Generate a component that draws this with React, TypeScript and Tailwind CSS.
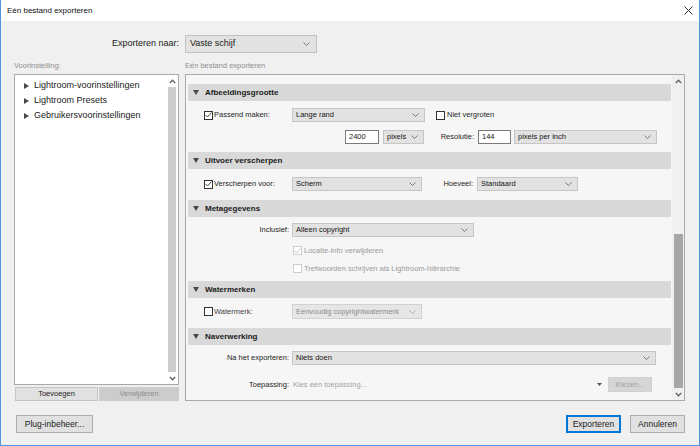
import React from "react";

const FONT = "font-['Liberation_Sans',Arial,sans-serif]";

function Chevron({ color = "#6b6b6b" }: { color?: string }) {
  return (
    <svg width="7" height="4" viewBox="0 0 7 4" className="shrink-0">
      <polyline points="0.5,0.5 3.5,3.5 6.5,0.5" fill="none" stroke={color} strokeWidth="0.9" />
    </svg>
  );
}

function ArrowUp() {
  return (
    <svg width="7" height="5" viewBox="0 0 7 5">
      <polyline points="0.8,4 3.5,1.2 6.2,4" fill="none" stroke="#606060" strokeWidth="1.3" />
    </svg>
  );
}

function ArrowDown() {
  return (
    <svg width="7" height="5" viewBox="0 0 7 5">
      <polyline points="0.8,1 3.5,3.8 6.2,1" fill="none" stroke="#606060" strokeWidth="1.3" />
    </svg>
  );
}

function Select({ text, className, disabled }: { text: string; className: string; disabled?: boolean }) {
  return (
    <div
      className={`flex items-center justify-between h-[14px] border pl-[3px] pr-[5px] text-[7.5px] ${
        disabled ? "border-[#d2d2d2] bg-[#e6e6e6] text-[#8c8c8c]" : "border-[#c6c6c6] bg-[#e2e2e2] text-[#141414]"
      } ${className}`}
    >
      <span>{text}</span>
      <Chevron color={disabled ? "#a5a5a5" : "#6b6b6b"} />
    </div>
  );
}

function Check({ checked, disabled }: { checked?: boolean; disabled?: boolean }) {
  return (
    <span
      className={`w-[9px] h-[9px] shrink-0 border flex items-center justify-center bg-white ${
        disabled ? "border-[#cfcfcf]" : "border-[#333333]"
      }`}
    >
      {checked && (
        <svg width="7" height="6" viewBox="0 0 7 6">
          <polyline
            points="0.6,3 2.6,5 6.4,0.6"
            fill="none"
            stroke={disabled ? "#bdbdbd" : "#333333"}
            strokeWidth="0.9"
          />
        </svg>
      )}
    </span>
  );
}

function Input({ value, className }: { value: string; className: string }) {
  return (
    <div className={`h-[14px] border border-[#7a7a7a] bg-white flex items-center px-[3px] text-[7.5px] text-[#141414] ${className}`}>
      {value}
    </div>
  );
}

function Header({ title }: { title: string }) {
  return (
    <div className="h-[17px] bg-[#d9d9d9] flex items-center pl-[5px] gap-[6px]">
      <svg width="6" height="5" viewBox="0 0 6 5">
        <polygon points="0,0 6,0 3,5" fill="#4a4a4a" />
      </svg>
      <span className="font-bold text-[8px] text-[#1a1a1a]">{title}</span>
    </div>
  );
}

function TreeItem({ label }: { label: string }) {
  return (
    <div className="h-[15px] flex items-center pl-[9px] gap-[5px]">
      <svg width="5" height="6" viewBox="0 0 5 6">
        <polygon points="0,0 5,3 0,6" fill="#4a4a4a" />
      </svg>
      <span className="text-[9px] text-[#1a1a1a]">{label}</span>
    </div>
  );
}

export default function App() {
  return (
    <div className={`${FONT} w-[700px] h-[446px] flex flex-col border-l border-r border-b border-[#4f94dc] bg-[#f0f0f0] text-[#1a1a1a]`}>
      {/* title bar */}
      <div className="h-[21px] bg-white flex items-center justify-between pl-[6px] pr-[6px] shrink-0">
        <span className="text-[8px] text-[#111]">Eén bestand exporteren</span>
        <svg width="9" height="9" viewBox="0 0 9 9">
          <path d="M0.5 0.5 L8.5 8.5 M8.5 0.5 L0.5 8.5" stroke="#333" strokeWidth="1" />
        </svg>
      </div>

      <div className="flex-1 flex flex-col pl-[13px] pr-[14px]">
        {/* export to */}
        <div className="mt-[14px] h-[18px] flex items-center gap-[6px]">
          <div className="w-[165px] text-right text-[9px] text-[#1a1a1a]">Exporteren naar:</div>
          <div className="w-[132px] h-[18px] flex items-center justify-between border border-[#c2c2c2] bg-[#e2e2e2] pl-[4px] pr-[6px] text-[9px]">
            <span>Vaste schijf</span>
            <Chevron />
          </div>
        </div>

        {/* labels */}
        <div className="h-[21px] pt-[4px] flex items-center gap-[6px] text-[7.5px] text-[#8f8f8f]">
          <div className="w-[165px]">Voorinstelling:</div>
          <div>Eén bestand exporteren</div>
        </div>

        {/* panels */}
        <div className="flex gap-[6px] h-[327px]">
          {/* left */}
          <div className="w-[165px] flex flex-col">
            <div className="h-[311px] border border-[#a9a9a9] bg-white flex">
              <div className="flex-1 pt-[3px]">
                <TreeItem label="Lightroom-voorinstellingen" />
                <TreeItem label="Lightroom Presets" />
                <TreeItem label="Gebruikersvoorinstellingen" />
              </div>
              <div className="w-[12px] flex flex-col items-center">
                <div className="h-[12px] flex items-center justify-center"><ArrowUp /></div>
                <div className="flex-1 w-[8px] bg-[#cdcdcd]" />
                <div className="h-[12px] flex items-center justify-center"><ArrowDown /></div>
              </div>
            </div>
            <div className="mt-[2px] flex h-[14px] text-[7.5px]">
              <div className="w-[83px] ml-[1px] border border-[#c4c4c4] bg-[#e1e1e1] flex items-center justify-center text-[#1a1a1a]">
                Toevoegen
              </div>
              <div className="w-[80px] ml-[1px] bg-[#cccccc] border border-[#cccccc] flex items-center justify-center text-[#8d8d8d]">
                Verwijderen
              </div>
            </div>
          </div>

          {/* right */}
          <div className="w-[500px] border border-[#a9a9a9] bg-[#f6f6f6] flex overflow-hidden">
            <div className="flex-1 pl-[2px] pr-[1px] pt-[9px] text-[7.5px] text-[#1e1e1e]">
              <Header title="Afbeeldingsgrootte" />
              <div className="h-[51px] pl-[16px] pt-[7px] flex flex-col gap-[8px]">
                <div className="flex items-center h-[14px]">
                  <div className="w-[88px] flex items-center gap-[1px]">
                    <Check checked />
                    <span>Passend maken:</span>
                  </div>
                  <Select text="Lange rand" className="w-[133px]" />
                  <div className="ml-[11px] flex items-center gap-[2px]">
                    <Check />
                    <span>Niet vergroten</span>
                  </div>
                </div>
                <div className="flex items-center h-[14px]">
                  <div className="w-[141px]" />
                  <Input value="2400" className="w-[34px]" />
                  <Select text="pixels" className="w-[41px] ml-[4px]" />
                  <div className="w-[50px] text-right">Resolutie:</div>
                  <Input value="144" className="w-[33px] ml-[4px]" />
                  <Select text="pixels per inch" className="w-[143px] ml-[3px]" />
                </div>
              </div>

              <Header title="Uitvoer verscherpen" />
              <div className="h-[31px] pl-[16px] pt-[8px]">
                <div className="flex items-center h-[14px]">
                  <div className="w-[88px] flex items-center gap-[1px]">
                    <Check checked />
                    <span>Verscherpen voor:</span>
                  </div>
                  <Select text="Scherm" className="w-[130px]" />
                  <div className="w-[51px] text-right">Hoeveel:</div>
                  <Select text="Standaard" className="w-[101px] ml-[4px]" />
                </div>
              </div>

              <Header title="Metagegevens" />
              <div className="h-[64px] pl-[16px] pt-[6px]">
                <div className="flex items-center h-[14px]">
                  <div className="w-[85px] mr-[3px] text-right">Inclusief:</div>
                  <Select text="Alleen copyright" className="w-[182px]" />
                </div>
                <div className="mt-[8px] h-[11px] flex items-center gap-[2px] pl-[89px] text-[#9a9a9a]">
                  <Check checked disabled />
                  <span>Locatie-info verwijderen</span>
                </div>
                <div className="mt-[7px] h-[11px] flex items-center gap-[2px] pl-[89px] text-[#9a9a9a]">
                  <Check disabled />
                  <span>Trefwoorden schrijven als Lightroom-hiërarchie</span>
                </div>
              </div>

              <Header title="Watermerken" />
              <div className="h-[30px] pl-[16px] pt-[6px]">
                <div className="flex items-center h-[15px]">
                  <div className="w-[88px] flex items-center gap-[1px] text-[#444]">
                    <Check />
                    <span>Watermerk:</span>
                  </div>
                  <Select text="Eenvoudig copyrightwatermerk" className="w-[130px] h-[15px]" disabled />
                </div>
              </div>

              <Header title="Naverwerking" />
              <div className="pl-[16px] pt-[6px]">
                <div className="flex items-center h-[14px]">
                  <div className="w-[85px] mr-[3px] text-right">Na het exporteren:</div>
                  <Select text="Niets doen" className="w-[364px]" />
                </div>
                <div className="mt-[12px] flex items-center h-[15px]">
                  <div className="w-[85px] mr-[3px] text-right">Toepassing:</div>
                  <div className="w-[312px] flex items-center justify-between pl-[1px] pr-[2px] text-[#a3a3a3]">
                    <span>Kies een toepassing...</span>
                    <svg width="5" height="3" viewBox="0 0 5 3">
                      <polygon points="0,0 5,0 2.5,3" fill="#555" />
                    </svg>
                  </div>
                  <div className="ml-[4px] w-[44px] h-[15px] bg-[#d6d6d6] border border-[#d0d0d0] flex items-center justify-center text-[#a2a2a2]">
                    Kiezen...
                  </div>
                </div>
              </div>
            </div>
            <div className="w-[12px] flex flex-col items-center bg-[#f0f0f0]">
              <div className="h-[12px] flex items-center justify-center"><ArrowUp /></div>
              <div className="h-[147px]" />
              <div className="flex-1 w-[9px] bg-[#a6a6a6]" />
              <div className="h-[12px] flex items-center justify-center"><ArrowDown /></div>
            </div>
          </div>
        </div>

        {/* bottom buttons */}
        <div className="mt-[14px] flex items-center h-[18px]">
          <div className="ml-[2px] w-[77px] h-[18px] border border-[#adadad] bg-[#e1e1e1] flex items-center justify-center text-[8.5px]">
            Plug-inbeheer...
          </div>
          <div className="flex-1" />
          <div className="w-[55px] h-[18px] border-2 border-[#0078d7] bg-[#e1e1e1] flex items-center justify-center text-[8.5px]">
            Exporteren
          </div>
          <div className="ml-[9px] w-[55px] h-[18px] border border-[#adadad] bg-[#e1e1e1] flex items-center justify-center text-[8.5px]">
            Annuleren
          </div>
        </div>
      </div>
    </div>
  );
}
